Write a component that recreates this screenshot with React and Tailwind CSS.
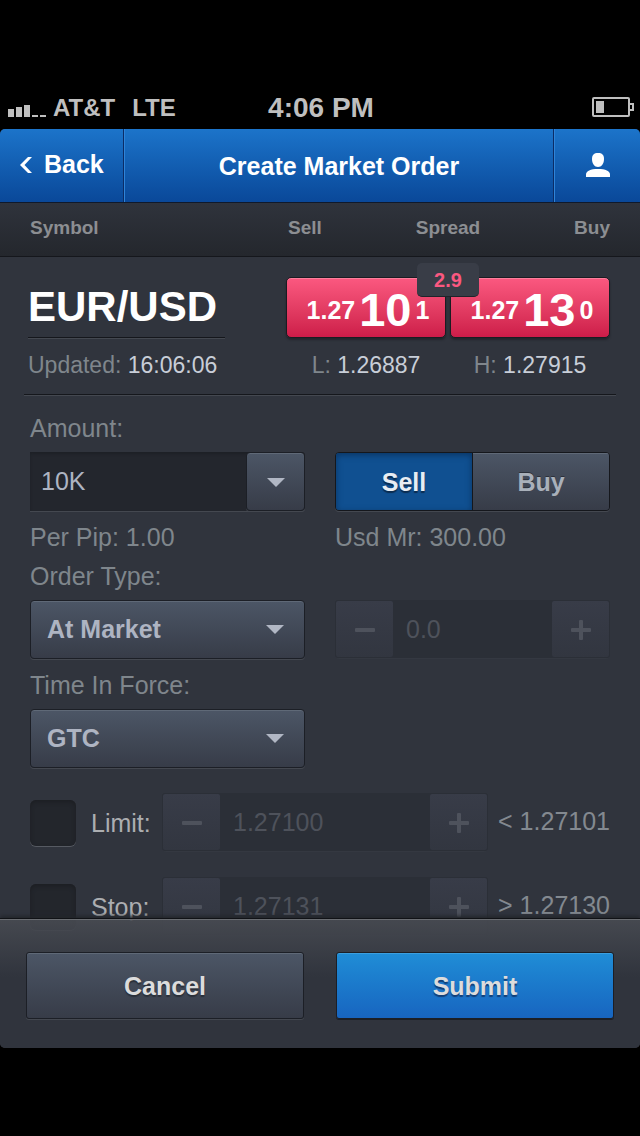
import React, { useState } from 'react';

const raised =
  'border border-[#1c1f26] bg-linear-to-b from-[#4c5666] to-[#373c48] shadow-[inset_0_1px_0_#5f6977,0_1px_0_#444850]';

const StatusBar = () => (
  <div className="flex h-[129px] items-end bg-black pb-[6px] font-bold text-[#bfbfbf]">
    <div className="flex flex-1 items-center gap-[7px] pl-2 text-[24px] leading-[30px]">
      <svg width="38" height="12" viewBox="0 0 38 12" fill="#bfbfbf" className="mt-[6px]" aria-hidden="true">
        <rect x="0" y="4" width="6" height="8" />
        <rect x="8" y="2" width="6" height="10" />
        <rect x="16" y="0" width="6" height="12" />
        <rect x="24" y="10" width="6" height="2" />
        <rect x="32" y="10" width="6" height="2" />
      </svg>
      <span>AT&amp;T</span>
      <span className="ml-[10px]">LTE</span>
    </div>
    <div className="text-[28px] leading-[30px]">4:06 PM</div>
    <div className="flex h-[30px] flex-1 items-center justify-end pr-[6px] pb-[2px]">
      <svg width="42" height="20" viewBox="0 0 42 20" fill="none" stroke="#bfbfbf" strokeWidth="2" aria-hidden="true">
        <rect x="1" y="1" width="36" height="18" rx="1" />
        <path d="M38 7h3v6h-3" />
        <rect x="4" y="4" width="8" height="12" fill="#bfbfbf" stroke="none" />
      </svg>
    </div>
  </div>
);

const NavBar = () => (
  <header className="flex h-[74px] items-stretch border-b border-[#10192b] bg-linear-to-b from-[#1c74ca] to-[#0a4899] text-[25px] font-bold text-white">
    <button type="button" className="flex w-[124px] items-center gap-3 border-r border-[#0b2c66] pb-[2px] pl-5">
      <svg width="12" height="16" viewBox="0 0 12 16" fill="#fff" aria-hidden="true">
        <path d="M8 0h4L4.500 8l7.500 8H8L0 8z" />
      </svg>
      Back
    </button>
    <h1 className="flex flex-1 items-center justify-center border-l border-[#2f84d8] pt-[2px]">Create Market Order</h1>
    <button
      type="button"
      aria-label="Account"
      className="flex w-[87px] items-center justify-center border-l border-[#0b2c66] pb-[2px] pl-[2px] shadow-[inset_1px_0_0_#2f84d8]"
    >
      <svg width="24" height="24" viewBox="0 0 24 24" fill="#fff" aria-hidden="true">
        <path d="M12 0c4 0 6 1.800 6 6 0 4.500-2.500 8-6 8s-6-3.500-6-8c0-4.200 2-6 6-6z" />
        <path d="M0 24v-2.500C0 18 4.500 16 12 16s12 2 12 5.500V24z" />
      </svg>
    </button>
  </header>
);

const PriceButton = ({ label, prefix, pips, fraction }) => (
  <button
    type="button"
    aria-label={label}
    className="flex h-[61px] flex-1 items-center justify-center gap-1 rounded-[5px] border border-[#1b1c22] bg-linear-to-b from-[#fb5880] to-[#cd1c49] pt-1 pl-1 text-[25px] font-bold text-white shadow-[inset_0_1px_0_#fd7f9c,0_2px_2px_#22252c]"
  >
    <span>{prefix}</span>
    <span className="text-[47px] leading-none">{pips}</span>
    <span>{fraction}</span>
  </button>
);

const Arrow = () => (
  <svg width="18" height="9" viewBox="0 0 18 9" fill="#b1b7c4" aria-hidden="true">
    <path d="M0 0h18L9 9z" />
  </svg>
);

const SelectBox = ({ id, value, options, onChange }) => (
  <div className="relative">
    <select
      id={id}
      value={value}
      onChange={(e) => onChange(e.target.value)}
      className={`h-[59px] w-full appearance-none rounded-[4px] pl-4 text-[25px] font-bold text-[#aeb4c2] ${raised}`}
    >
      {options.map((option) => (
        <option key={option}>{option}</option>
      ))}
    </select>
    <span className="pointer-events-none absolute inset-y-0 right-[21px] flex items-center">
      <Arrow />
    </span>
  </div>
);

const StepButton = ({ label, plus }) => (
  <button
    type="button"
    disabled
    aria-label={label}
    className="flex w-[59px] shrink-0 items-center justify-center rounded-[3px] border border-[#2b2f37] bg-linear-to-b from-[#383c48] to-[#323640] pt-[2px]"
  >
    <svg width="20" height="20" viewBox="0 0 20 20" fill="#4e525c" aria-hidden="true">
      <rect x="0" y="8" width="20" height="4" rx="1" />
      {plus && <rect x="8" y="0" width="4" height="20" rx="1" />}
    </svg>
  </button>
);

const Stepper = ({ label, value }) => (
  <div className="flex h-[59px] min-w-0 flex-1 rounded-[4px] border-b border-[#343841] bg-[#2b2f37]">
    <StepButton label={`Decrease ${label}`} />
    <input
      type="text"
      disabled
      aria-label={label}
      defaultValue={value}
      className="w-full min-w-0 bg-transparent pt-[2px] pl-3 text-[25px] text-[#4e525b]"
    />
    <StepButton label={`Increase ${label}`} plus />
  </div>
);

const TriggerRow = ({ id, label, value, bound }) => (
  <div className="flex items-center">
    <input
      id={id}
      type="checkbox"
      className="size-[46px] shrink-0 appearance-none rounded-[6px] bg-[#23262c] shadow-[inset_0_2px_4px_#1c1e23,0_1px_0_#565a62] checked:bg-[#105091]"
    />
    <label htmlFor={id} className="w-[86px] shrink-0 pt-[2px] pl-[15px] text-[25px] text-[#acaeb1]">
      {label}:
    </label>
    <Stepper label={label} value={value} />
    <span className="pb-[2px] pl-[10px] text-[25px] whitespace-nowrap text-[#838990]">{bound}</span>
  </div>
);

const App = () => {
  const [side, setSide] = useState('Sell');
  const [amount, setAmount] = useState('10K');
  const [orderType, setOrderType] = useState('At Market');
  const [timeInForce, setTimeInForce] = useState('GTC');

  const label = 'block text-[25px] leading-[30px] text-[#7f868c]';

  const sideClass = (name) =>
    side === name
      ? 'bg-[#105091] text-[#e8edf3] shadow-[inset_0_2px_6px_#0a3462] [text-shadow:0_2px_1px_#0b2c50]'
      : 'bg-linear-to-b from-[#4c5666] to-[#373c48] text-[#a9b0ba] shadow-[inset_0_1px_0_#5f6977] [text-shadow:0_-1px_0_#2b303a]';

  return (
    <div className="min-h-screen bg-black font-['Liberation_Sans',Arial,sans-serif]">
      <StatusBar />

      <div className="overflow-hidden rounded-[5px] bg-[#30343d]">
        <NavBar />

        {/* Column titles */}
        <div className="flex h-[54px] justify-between border-b border-[#15171c] bg-linear-to-b from-[#2f333c] to-[#24272d] px-[30px] pb-[2px] text-[19px] font-bold text-[#8c8e92]">
          <div className="flex items-center">Symbol</div>
          <div className="flex w-[324px] items-center justify-between pl-[2px]">
            <span>Sell</span>
            <span>Spread</span>
            <span>Buy</span>
          </div>
        </div>

        {/* Quote */}
        <section className="flex justify-between pt-5 pr-[30px] pb-[14px] pl-7 text-[23px] leading-[30px] text-[#c8ced8]">
          <div className="w-[197px]">
            <h2 className="border-b border-[#15171c] text-[42px] leading-[60px] font-bold text-white shadow-[0_1px_0_#444850]">
              EUR/USD
            </h2>
            <p className="mt-3 whitespace-nowrap">
              <span className="text-[#7f868c]">Updated:</span> 16:06:06
            </p>
          </div>
          <div className="relative w-[324px]">
            <div className="flex gap-1">
              <PriceButton label="Sell at 1.27101" prefix="1.27" pips="10" fraction="1" />
              <PriceButton label="Buy at 1.27130" prefix="1.27" pips="13" fraction="0" />
            </div>
            <div className="absolute -top-[14px] left-1/2 flex h-[34px] w-[62px] -translate-x-1/2 items-center justify-center rounded-[5px] border-b border-[#20232a] bg-[#393d47] text-[20px] font-bold text-[#fb5880]">
              2.9
            </div>
            <div className="mt-3 flex gap-1 text-center">
              <p className="flex-1">
                <span className="text-[#7f868c]">L:</span> 1.26887
              </p>
              <p className="flex-1">
                <span className="text-[#7f868c]">H:</span> 1.27915
              </p>
            </div>
          </div>
        </section>
        <hr className="mx-6 h-[2px] border-t border-b border-t-[#15171c] border-b-[#444850]" />

        <form onSubmit={(e) => e.preventDefault()}>
          <div className="px-[30px]">
            <div className="grid grid-cols-2 gap-x-[30px]">
              <div>
                <label htmlFor="amount" className={`mt-[17px] mb-[9px] ${label}`}>
                  Amount:
                </label>
                <div className="flex h-[59px] rounded-r-[4px] bg-[#23262d] shadow-[inset_0_2px_3px_#1d2026,0_1px_0_#444850]">
                  <input
                    id="amount"
                    type="text"
                    value={amount}
                    onChange={(e) => setAmount(e.target.value)}
                    className="min-w-0 flex-1 bg-transparent pl-[11px] text-[25px] text-[#aeb4c2]"
                  />
                  <button
                    type="button"
                    aria-label="Choose amount"
                    className={`flex w-[59px] items-center justify-center rounded-[4px] pt-[2px] ${raised}`}
                  >
                    <Arrow />
                  </button>
                </div>
                <p className={`mt-[11px] ${label}`}>Per Pip: 1.00</p>
              </div>
              <div className="flex flex-col justify-end">
                <div className="flex h-[59px] overflow-hidden rounded-[4px] border border-[#15171c] text-[25px] font-bold shadow-[0_1px_0_#444850]">
                  <button
                    type="button"
                    aria-pressed={side === 'Sell'}
                    onClick={() => setSide('Sell')}
                    className={`flex-1 border-r border-[#15171c] pt-[2px] ${sideClass('Sell')}`}
                  >
                    Sell
                  </button>
                  <button
                    type="button"
                    aria-pressed={side === 'Buy'}
                    onClick={() => setSide('Buy')}
                    className={`flex-1 pt-[2px] ${sideClass('Buy')}`}
                  >
                    Buy
                  </button>
                </div>
                <p className={`mt-[11px] ${label}`}>Usd Mr: 300.00</p>
              </div>

              <div>
                <label htmlFor="order-type" className={`my-[9px] ${label}`}>
                  Order Type:
                </label>
                <SelectBox
                  id="order-type"
                  value={orderType}
                  options={['At Market', 'Market Range']}
                  onChange={setOrderType}
                />
              </div>
              <div className="flex items-end">
                <Stepper label="Range" value="0.0" />
              </div>

              <div>
                <label htmlFor="time-in-force" className={`mt-[11px] mb-[9px] ${label}`}>
                  Time In Force:
                </label>
                <SelectBox
                  id="time-in-force"
                  value={timeInForce}
                  options={['GTC', 'IOC', 'FOK']}
                  onChange={setTimeInForce}
                />
              </div>
            </div>

            <div className="mt-[25px] flex flex-col gap-[25px]">
              <TriggerRow id="limit" label="Limit" value="1.27100" bound="< 1.27101" />
              <TriggerRow id="stop" label="Stop" value="1.27131" bound="> 1.27130" />
            </div>
          </div>

          {/* Action bar, slides over the last row */}
          <div className="relative -mt-[18px] flex h-[130px] gap-8 border-t border-[#101216] bg-linear-to-b from-[#484b52]/90 to-[#30343d] to-45% px-[26px] pt-[33px] text-[25px] font-bold text-[#dcdcdc] shadow-[inset_0_1px_0_#6a6d72,0_-2px_4px_#22252b]">
            <button
              type="button"
              className={`h-[67px] flex-1 rounded-[3px] pt-[2px] [text-shadow:0_2px_1px_#2b303a] ${raised}`}
            >
              Cancel
            </button>
            <button
              type="submit"
              className="h-[67px] flex-1 rounded-[3px] border border-[#1c1f26] bg-linear-to-b from-[#208dd6] to-[#1865c0] pt-[2px] shadow-[inset_0_1px_0_#3b9fe0,0_1px_0_#1c1f26] [text-shadow:0_2px_1px_#123f78]"
            >
              Submit
            </button>
          </div>
        </form>
      </div>
    </div>
  );
};

export default App;
